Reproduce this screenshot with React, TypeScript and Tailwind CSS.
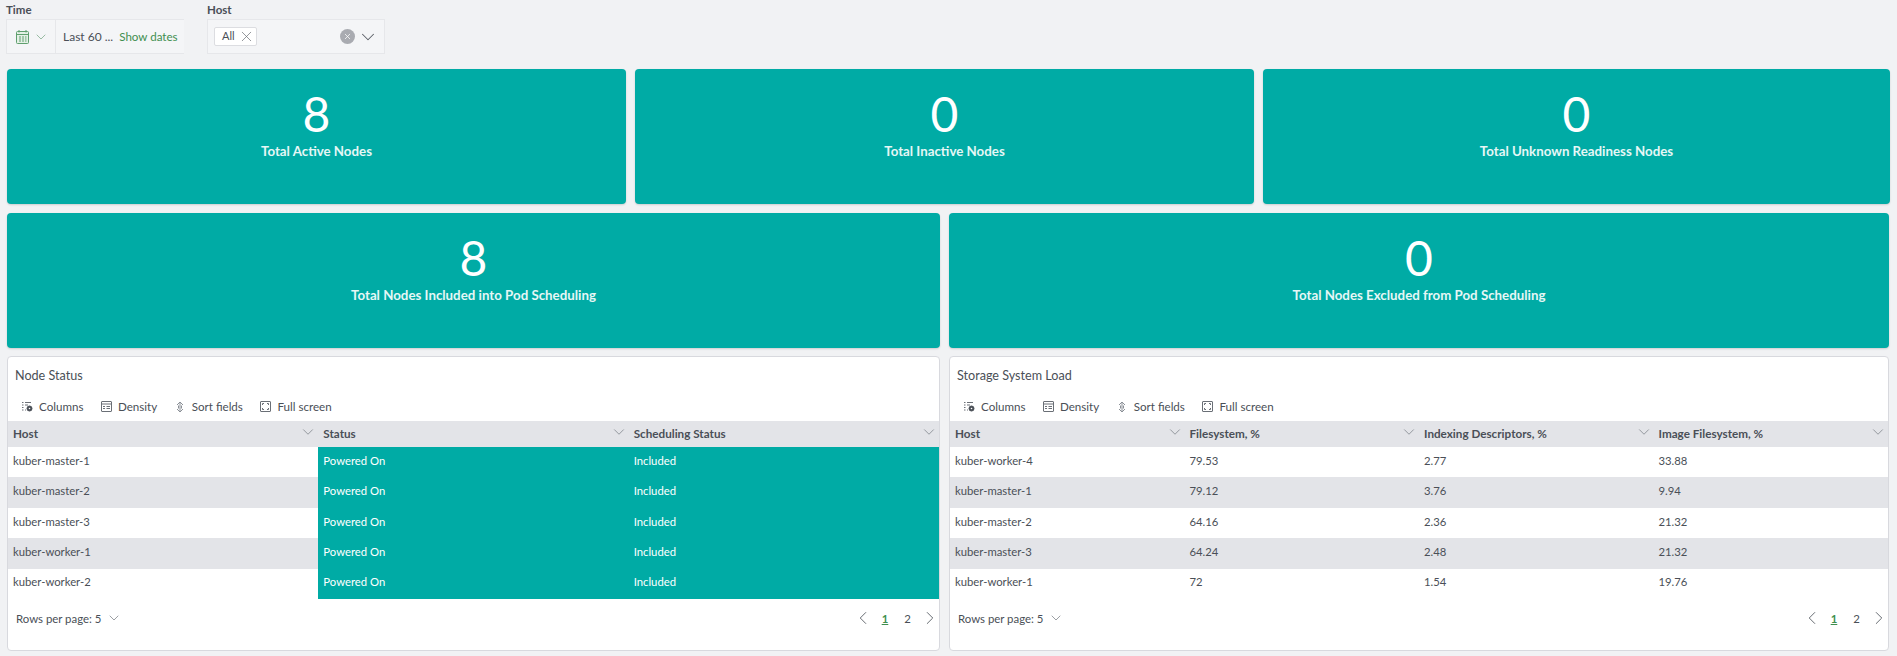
import { ChevronDown, ChevronLeft, ChevronRight, X } from 'lucide-react';

const cellText = 'text-[#4a4f57]';

function CalendarIcon() {
  return (
    <svg width="13" height="14" viewBox="0 0 13 14" fill="none" stroke="#5f9f6e" strokeWidth="1">
      <rect x="0.5" y="1.5" width="12" height="12" rx="1" fill="#e4f0e6" />
      <path d="M0.5 4.5h12M3 0v2.5M10 0v2.5" />
      <path d="M3 7h2M6 7h2M9 7h1.5M3 9h2M6 9h2M9 9h1.5M3 11h2M6 11h2M9 11h1.5" />
    </svg>
  );
}

function ColumnsIcon() {
  return (
    <svg width="11" height="11" viewBox="0 0 11 11" fill="none" stroke="#6a6f76" strokeWidth="1">
      <path d="M0 1.5h1.5M3 1.5h6M0 4h1.5M3 4h3M0 6.5h1.5M0 9h1.5M3 9h1" />
      <circle cx="7.5" cy="7.5" r="2.5" fill="#4a4f57" stroke="#4a4f57" />
      <circle cx="7.5" cy="7.5" r="0.8" fill="#ffffff" stroke="none" />
    </svg>
  );
}

function DensityIcon() {
  return (
    <svg width="11" height="11" viewBox="0 0 11 11" fill="none" stroke="#6a6f76" strokeWidth="1">
      <rect x="0.5" y="0.5" width="10" height="10" rx="0.5" />
      <path d="M0.5 3h10M2 5.5h2M5.5 5.5h3.5M2 7.5h2M5.5 7.5h3.5" />
    </svg>
  );
}

function SortIcon() {
  return (
    <svg width="10" height="12" viewBox="0 0 10 12" fill="none" stroke="#8a8f96" strokeWidth="1">
      <path d="M2 4L5 1 8 4M2 8L5 11 8 8M5 2v8M3.5 4.5v3M6.5 4.5v3" />
    </svg>
  );
}

function FullIcon() {
  return (
    <svg width="11" height="11" viewBox="0 0 11 11" fill="none" stroke="#6a6f76" strokeWidth="1">
      <rect x="0.5" y="0.5" width="10" height="10" rx="0.5" />
      <path d="M2.5 4v-1.5h1.5M7 2.5h1.5v1.5M8.5 7v1.5h-1.5M4 8.5h-1.5v-1.5" />
    </svg>
  );
}

function Toolbar() {
  const items = [
    { label: 'Columns', icon: <ColumnsIcon /> },
    { label: 'Density', icon: <DensityIcon /> },
    { label: 'Sort fields', icon: <SortIcon /> },
    { label: 'Full screen', icon: <FullIcon /> },
  ];
  return (
    <div className="flex items-center gap-[17.5px] pl-[14px] h-[20px] mt-[12px] mb-[4px] text-[11.6px] text-[#4a4f57]">
      {items.map((item) => (
        <div key={item.label} className="flex items-center">
          <div className="w-[17px] flex items-center">{item.icon}</div>
          <span>{item.label}</span>
        </div>
      ))}
    </div>
  );
}

function StatCard({ value, label }: { value: string; label: string }) {
  return (
    <div className="h-[135px] rounded-[4px] bg-[#00aba5] text-white flex flex-col items-center pt-[20px] shadow-[0_1px_2px_rgba(0,0,0,0.15)]">
      <div className="text-[48px] leading-[50px]">{value}</div>
      <div className="text-[13.3px] leading-[18px] mt-[3px] font-bold text-[#e6f7f6]">{label}</div>
    </div>
  );
}

interface PanelProps {
  title: string;
  columns: string[];
  gridClass: string;
  rows: string[][];
  statusColumns?: boolean;
}

function Panel({ title, columns, gridClass, rows, statusColumns }: PanelProps) {
  return (
    <div className="h-[295px] bg-white rounded-[4px] border border-[#d8d9de] flex flex-col">
      <div className="pl-[7px] pt-[10px] text-[12.6px] leading-[18px] text-[#4a4f57]">{title}</div>
      <Toolbar />
      <div className={`grid ${gridClass} h-[26px] shrink-0 bg-[#e3e4e8] items-center text-[11.7px] font-bold text-[#4a4f57]`}>
        {columns.map((col) => (
          <div key={col} className="flex items-center justify-between pl-[5px] pr-[1px]">
            <span>{col}</span>
            <ChevronDown className="w-[18px] h-[18px] text-[#7a7f86] -mt-[3px]" strokeWidth={1} />
          </div>
        ))}
      </div>
      {rows.map((row, i) => (
        <div
          key={row[0]}
          className={`grid ${gridClass} h-[30.4px] shrink-0 items-center text-[11.3px] ${cellText} ${i % 2 === 1 ? 'bg-[#e3e4e8]' : 'bg-white'}`}
        >
          {row.map((cell, j) => (
            <div
              key={j}
              className={`h-full flex items-center pl-[5px] pb-[2px] ${statusColumns && j > 0 ? 'bg-[#00aba5] text-white' : ''}`}
            >
              {cell}
            </div>
          ))}
        </div>
      ))}
      <div className="flex-1 flex items-center justify-between pl-[8px] pr-[3px] pb-[12px] text-[11.4px] text-[#4a4f57]">
        <div className="flex items-center gap-[5px]">
          <span>Rows per page: 5</span>
          <ChevronDown className="w-[16px] h-[16px] text-[#6a6f76] -mt-[1px]" strokeWidth={1} />
        </div>
        <div className="flex items-center -mr-[5px]">
          <ChevronLeft className="w-[22px] h-[22px] text-[#5a5f66]" strokeWidth={1} />
          <span className="w-[22px] text-center">
            <span className="font-bold text-[#3f8f4f] underline">1</span>
          </span>
          <span className="w-[23px] text-center">2</span>
          <ChevronRight className="w-[22px] h-[22px] text-[#5a5f66]" strokeWidth={1} />
        </div>
      </div>
    </div>
  );
}

const nodeRows = [
  ['kuber-master-1', 'Powered On', 'Included'],
  ['kuber-master-2', 'Powered On', 'Included'],
  ['kuber-master-3', 'Powered On', 'Included'],
  ['kuber-worker-1', 'Powered On', 'Included'],
  ['kuber-worker-2', 'Powered On', 'Included'],
];

const storageRows = [
  ['kuber-worker-4', '79.53', '2.77', '33.88'],
  ['kuber-master-1', '79.12', '3.76', '9.94'],
  ['kuber-master-2', '64.16', '2.36', '21.32'],
  ['kuber-master-3', '64.24', '2.48', '21.32'],
  ['kuber-worker-1', '72', '1.54', '19.76'],
];

export default function App() {
  return (
    <div
      className="w-[1897px] h-[656px] overflow-hidden bg-[#f1f2f4] pl-[7px]"
      style={{ fontFamily: 'Lato, "Noto Sans", sans-serif' }}
    >
      {/* Filters */}
      <div className="flex h-[69px] text-[12px] text-[#4a4f57]">
        <div className="w-[178px] mr-[22px]">
          <div className="h-[19px] leading-[19px] font-bold text-[11.5px] -ml-px">Time</div>
          <div className="h-[35px] w-[178px] -ml-px flex items-center bg-[#f4f5f7] border border-[#e6e7ea] border-r-0">
            <div className="h-full w-[49px] flex items-center pl-[9px] gap-[7px] border-r border-[#e6e7ea]">
              <CalendarIcon />
              <ChevronDown className="w-[16px] h-[16px] text-[#6a9f78] -ml-[3px]" strokeWidth={1} />
            </div>
            <span className="ml-[7px] whitespace-nowrap">Last 60 ...</span>
            <span className="ml-[6px] whitespace-nowrap text-[#3f8f4f] text-[11.6px]">Show dates</span>
          </div>
        </div>
        <div className="w-[178px]">
          <div className="h-[19px] leading-[19px] font-bold text-[11.5px]">Host</div>
          <div className="h-[35px] w-[178px] flex items-center bg-[#f4f5f7] border border-[#e6e7ea] pl-[6px] pr-[5px]">
            <div className="h-[19px] w-[43px] flex items-center justify-between bg-white border border-[#dcdde1] rounded-[2px] pl-[7px] pr-[1px] text-[11px]">
              All
              <X className="w-[17px] h-[17px] text-[#6a6f76]" strokeWidth={1} />
            </div>
            <div className="ml-auto mr-[1px] w-[15px] h-[15px] rounded-full bg-[#a9abb1] flex items-center justify-center">
              <X className="w-[9px] h-[9px] text-white" strokeWidth={2} />
            </div>
            <ChevronDown className="w-[22px] h-[22px] text-[#5a5f66] ml-[1px]" strokeWidth={1.1} />
          </div>
        </div>
      </div>

      {/* Stats */}
      <div className="grid grid-cols-[619px_619px_627px] gap-[9px]">
        <StatCard value="8" label="Total Active Nodes" />
        <StatCard value="0" label="Total Inactive Nodes" />
        <StatCard value="0" label="Total Unknown Readiness Nodes" />
      </div>
      <div className="grid grid-cols-[933px_940px] gap-[9px] mt-[9px]">
        <StatCard value="8" label="Total Nodes Included into Pod Scheduling" />
        <StatCard value="0" label="Total Nodes Excluded from Pod Scheduling" />
      </div>

      {/* Tables */}
      <div className="grid grid-cols-[933px_940px] gap-[9px] mt-[8px]">
        <Panel
          title="Node Status"
          columns={['Host', 'Status', 'Scheduling Status']}
          gridClass="grid-cols-3"
          rows={nodeRows}
          statusColumns
        />
        <Panel
          title="Storage System Load"
          columns={['Host', 'Filesystem, %', 'Indexing Descriptors, %', 'Image Filesystem, %']}
          gridClass="grid-cols-4"
          rows={storageRows}
        />
      </div>
    </div>
  );
}
